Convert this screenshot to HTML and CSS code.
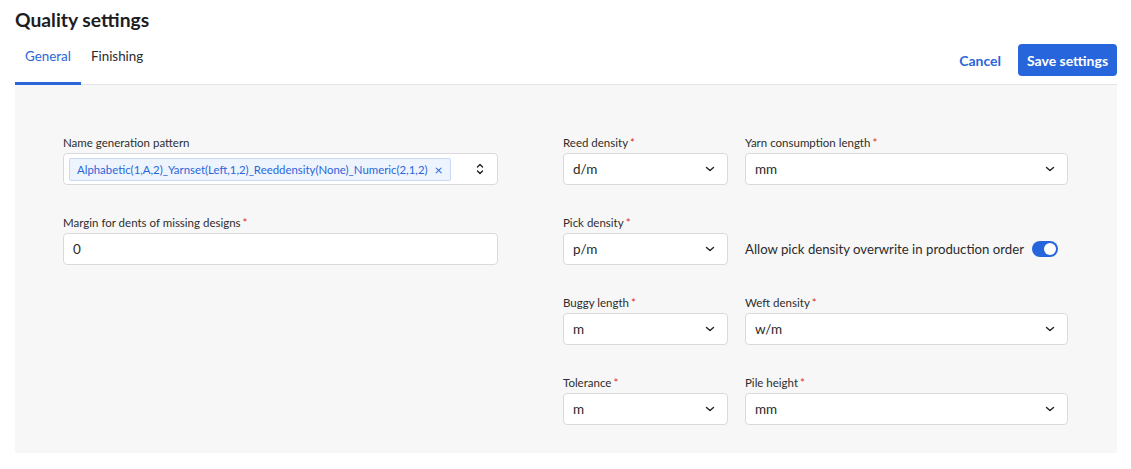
FILE: index.html
```html
<!DOCTYPE html>
<html lang="en">
<head>
<meta charset="utf-8">
<title>Quality settings</title>
<link rel="stylesheet" href="styles.css">
</head>
<body>
<div class="page">
  <h1 class="title">Quality settings</h1>
  <div class="tabbar">
    <div class="tabs">
      <div class="tab active">General</div>
      <div class="tab">Finishing</div>
    </div>
    <div class="actions">
      <button class="btn-link">Cancel</button>
      <button class="btn-primary">Save settings</button>
    </div>
  </div>
  <div class="panel">
    <div class="left">
      <div class="field">
        <div class="label">Name generation pattern</div>
        <div class="input multi">
          <span class="chip">Alphabetic(1,A,2)_Yarnset(Left,1,2)_Reeddensity(None)_Numeric(2,1,2)<span class="chip-x">×</span></span>
          <svg class="updown" width="10" height="14" viewBox="0 0 10 14"><path d="M2.5 5 L5 2.5 L7.5 5 M2.5 9 L5 11.5 L7.5 9" fill="none" stroke="#222" stroke-width="1.4" stroke-linecap="round" stroke-linejoin="round"/></svg>
        </div>
      </div>
      <div class="field">
        <div class="label">Margin for dents of missing designs<span class="req">*</span></div>
        <div class="input">0</div>
      </div>
    </div>
    <div class="right">
      <div class="field">
        <div class="label">Reed density<span class="req">*</span></div>
        <div class="input select">d/m<svg class="chev" width="10" height="6" viewBox="0 0 10 6"><path d="M1.5 1.5 L5 4.5 L8.5 1.5" fill="none" stroke="#222" stroke-width="1.4" stroke-linecap="round" stroke-linejoin="round"/></svg></div>
      </div>
      <div class="field">
        <div class="label">Yarn consumption length<span class="req">*</span></div>
        <div class="input select">mm<svg class="chev" width="10" height="6" viewBox="0 0 10 6"><path d="M1.5 1.5 L5 4.5 L8.5 1.5" fill="none" stroke="#222" stroke-width="1.4" stroke-linecap="round" stroke-linejoin="round"/></svg></div>
      </div>
      <div class="field">
        <div class="label">Pick density<span class="req">*</span></div>
        <div class="input select">p/m<svg class="chev" width="10" height="6" viewBox="0 0 10 6"><path d="M1.5 1.5 L5 4.5 L8.5 1.5" fill="none" stroke="#222" stroke-width="1.4" stroke-linecap="round" stroke-linejoin="round"/></svg></div>
      </div>
      <div class="field toggle-field">
        <span class="toggle-text">Allow pick density overwrite in production order</span>
        <span class="toggle"><span class="knob"></span></span>
      </div>
      <div class="field">
        <div class="label">Buggy length<span class="req">*</span></div>
        <div class="input select">m<svg class="chev" width="10" height="6" viewBox="0 0 10 6"><path d="M1.5 1.5 L5 4.5 L8.5 1.5" fill="none" stroke="#222" stroke-width="1.4" stroke-linecap="round" stroke-linejoin="round"/></svg></div>
      </div>
      <div class="field">
        <div class="label">Weft density<span class="req">*</span></div>
        <div class="input select">w/m<svg class="chev" width="10" height="6" viewBox="0 0 10 6"><path d="M1.5 1.5 L5 4.5 L8.5 1.5" fill="none" stroke="#222" stroke-width="1.4" stroke-linecap="round" stroke-linejoin="round"/></svg></div>
      </div>
      <div class="field">
        <div class="label">Tolerance<span class="req">*</span></div>
        <div class="input select">m<svg class="chev" width="10" height="6" viewBox="0 0 10 6"><path d="M1.5 1.5 L5 4.5 L8.5 1.5" fill="none" stroke="#222" stroke-width="1.4" stroke-linecap="round" stroke-linejoin="round"/></svg></div>
      </div>
      <div class="field">
        <div class="label">Pile height<span class="req">*</span></div>
        <div class="input select">mm<svg class="chev" width="10" height="6" viewBox="0 0 10 6"><path d="M1.5 1.5 L5 4.5 L8.5 1.5" fill="none" stroke="#222" stroke-width="1.4" stroke-linecap="round" stroke-linejoin="round"/></svg></div>
      </div>
    </div>
  </div>
</div>
</body>
</html>
```

FILE: styles.css
```css
* { box-sizing: border-box; }
body {
  margin: 0;
  font-family: "Lato", "Noto Sans", sans-serif;
  color: #212121;
  background: #fff;
}
.page {
  width: 1117px;
  padding-left: 15px;
}
.title {
  margin: 0;
  padding-top: 8px;
  font-size: 19.3px;
  line-height: 24px;
  font-weight: 700;
  color: #1d1d1f;
}
.tabbar {
  display: flex;
  justify-content: space-between;
  align-items: flex-end;
  border-bottom: 1px solid #e3e3e8;
  height: 53px;
}
.tabs {
  display: flex;
}
.tab {
  font-size: 13.4px;
  line-height: 18px;
  padding: 0 10px 17px;
  color: #2b2b2b;
  margin-bottom: -1px;
  border-bottom: 3px solid transparent;
}
.tab.active {
  color: #2a66d9;
  border-bottom-color: #2a66d9;
}
.actions {
  display: flex;
  align-items: center;
  gap: 17px;
  padding-bottom: 8px;
}
.btn-link {
  background: none;
  border: none;
  font-family: inherit;
  font-size: 14px;
  font-weight: 700;
  color: #2a66d9;
  padding: 0;
}
.btn-primary {
  font-family: inherit;
  font-size: 14px;
  font-weight: 700;
  color: #fff;
  background: #2665dc;
  border: none;
  border-radius: 4px;
  height: 32px;
  width: 99px;
  padding: 0;
}
.panel {
  background: #f7f7f7;
  display: grid;
  grid-template-columns: 435px 505px;
  column-gap: 65px;
  padding: 50px 0 28px 48px;
}
.left {
  display: flex;
  flex-direction: column;
  gap: 30px;
}
.right {
  display: grid;
  grid-template-columns: 165px 323px;
  column-gap: 17px;
  row-gap: 30px;
}
.field {
  display: flex;
  flex-direction: column;
  gap: 2px;
}
.label {
  font-size: 11.5px;
  line-height: 16px;
  color: #2e2e2e;
}
.req {
  color: #d9322f;
  margin-left: 2px;
}
.input {
  height: 32px;
  background: #fff;
  border: 1px solid #dadade;
  border-radius: 4px;
  display: flex;
  align-items: center;
  padding: 0 12px 0 9px;
  font-size: 13.5px;
  color: #2a2a2a;
}
.select {
  justify-content: space-between;
}
.multi {
  padding: 0 10px 0 5px;
  justify-content: space-between;
}
.chip {
  height: 23px;
  display: flex;
  align-items: center;
  background: #eef4fd;
  border: 1px solid #c8daf6;
  border-radius: 2px;
  color: #2a66d9;
  font-size: 11.4px;
  padding: 0 7px;
}
.chip-x {
  margin-left: 7px;
  font-size: 14px;
}
.updown { margin-right: 2px; }
.toggle-field {
  flex-direction: row;
  align-items: center;
  align-self: end;
  height: 32px;
  gap: 8px;
}
.toggle-text {
  font-size: 13.2px;
  color: #2b2b2b;
  white-space: nowrap;
}
.toggle {
  width: 26px;
  height: 16px;
  border-radius: 8px;
  background: #2665dc;
  display: flex;
  align-items: center;
  justify-content: flex-end;
  padding: 2px;
}
.knob {
  width: 12px;
  height: 12px;
  border-radius: 50%;
  background: #fff;
}
```
